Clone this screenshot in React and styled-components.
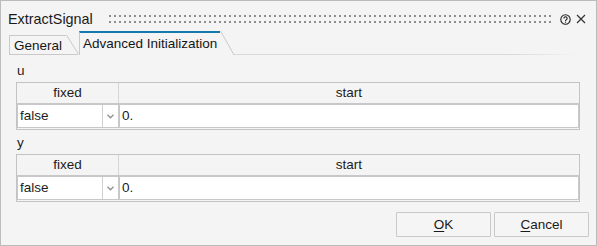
import React from 'react';
import styled, { createGlobalStyle } from 'styled-components';

const GlobalStyle = createGlobalStyle`
  html, body {
    margin: 0;
    padding: 0;
    background: #f4f4f4;
  }
  body {
    font-family: "Liberation Sans", Arial, sans-serif;
  }
`;

const Window = styled.div`
  width: 597px;
  height: 246px;
  box-sizing: border-box;
  border: 1px solid #bcbcbc;
  background: #f4f4f4;
  display: flex;
  flex-direction: column;
  color: #1c1c1c;
  font-size: 13.5px;
`;

const TitleBar = styled.div`
  height: 29px;
  display: flex;
  align-items: flex-start;
  padding: 0 10px 0 7px;
`;

const Title = styled.div`
  font-size: 14.4px;
  line-height: 16px;
  margin-top: 10px;
  color: #1a1a1a;
`;

const Grip = styled.div`
  flex: 1;
  height: 8px;
  margin: 14px 6px 0 16px;
  background-color: #8e8e8e;
  background-image:
    linear-gradient(90deg, transparent 2px, #f4f4f4 2px),
    linear-gradient(transparent 2px, #f4f4f4 2px);
  background-size: 5px 6px;
`;

const IconButton = styled.div`
  width: ${p => p.$size}px;
  height: ${p => p.$size}px;
  margin-top: ${p => p.$top}px;
  margin-left: ${p => p.$gap}px;
  display: flex;
  svg { display: block; }
`;

const TabStrip = styled.div`
  height: 25px;
  display: flex;
  align-items: flex-end;
  padding-left: 8px;
`;

const Tab = styled.div`
  height: ${p => (p.$active ? 24 : 20)}px;
  box-sizing: border-box;
  display: flex;
  padding-right: ${p => p.$slant}px;
  margin-right: 1px;
  border-bottom: ${p => (p.$active ? 'none' : '1px solid #c9c9c9')};
`;

const TabFace = styled.div`
  position: relative;
  box-sizing: border-box;
  height: 100%;
  border-left: 1px solid #c9c9c9;
  border-top: ${p => (p.$active ? '2px solid #1479ad' : '1px solid #c9c9c9')};
  padding: ${p => (p.$active ? '2px 3px 0 3px' : '1px 4px 0 4px')};
  line-height: 17px;
  font-size: 13.5px;
  color: #161616;
  white-space: nowrap;

  &::after {
    content: '';
    position: absolute;
    left: 100%;
    top: ${p => (p.$active ? -2 : -1)}px;
    height: calc(100% + ${p => (p.$active ? 2 : 1)}px);
    width: 1px;
    background: #c9c9c9;
    transform-origin: top left;
    transform: skewX(${p => p.$angle}deg);
  }
`;

const TabLine = styled.div`
  flex: 1;
  height: 1px;
  margin-right: 16px;
  background: linear-gradient(90deg, #d9d9d9 0%, #d9d9d9 80%, rgba(217, 217, 217, 0) 100%);
`;

const Content = styled.div`
  padding: 5px 16px 0 15px;
  display: flex;
  flex-direction: column;
`;

const Label = styled.div`
  line-height: 22px;
  height: 22px;
  margin-top: ${p => (p.$first ? 0 : 2)}px;
  padding-left: 1px;
`;

const Table = styled.div`
  border: 1px solid #c3c3c3;
  background: #f4f4f4;
`;

const HeaderRow = styled.div`
  display: grid;
  grid-template-columns: 102px 1fr;
  height: 20px;
  border-bottom: 1px solid #c8c8c8;
`;

const HeaderCell = styled.div`
  text-align: center;
  line-height: 20px;
  border-right: ${p => (p.$last ? 'none' : '1px solid #d6d6d6')};
`;

const DataRow = styled.div`
  display: grid;
  grid-template-columns: 102px 1fr;
  height: 25px;
`;

const Cell = styled.div`
  box-sizing: border-box;
  height: 24px;
  background: #fff;
  border: 1px solid #c8c8c8;
  display: flex;
  align-items: stretch;
  line-height: 22px;
`;

const Value = styled.div`
  flex: 1;
  padding-left: ${p => p.$pad}px;
`;

const Arrow = styled.div`
  width: 15px;
  border-left: 1px solid #d0d0d0;
  display: flex;
  align-items: center;
  justify-content: center;
`;

const ButtonBar = styled.div`
  margin-top: auto;
  display: flex;
  justify-content: flex-end;
  gap: 3px;
  padding: 0 7px 8px 0;
`;

const Button = styled.div`
  width: 95px;
  height: 25px;
  box-sizing: border-box;
  border: 1px solid #c9c9c9;
  border-radius: 1px;
  background: #f5f5f5;
  display: flex;
  align-items: center;
  justify-content: center;
  color: #1a1a1a;

  u {
    text-decoration: underline;
    text-underline-offset: 2px;
  }
`;

const HelpIcon = () => (
  <svg width="11" height="11" viewBox="0 0 11 11" fill="none">
    <circle cx="5.5" cy="5.5" r="4.7" stroke="#222" strokeWidth="1.1" />
    <path d="M3.9 4.4a1.6 1.6 0 1 1 2.4 1.4c-.55.3-.8.6-.8 1.2" stroke="#222" strokeWidth="1.1" />
    <circle cx="5.5" cy="8.2" r="0.65" fill="#222" />
  </svg>
);

const CloseIcon = () => (
  <svg width="10" height="10" viewBox="0 0 10 10">
    <path d="M1 1L9 9M9 1L1 9" stroke="#333" strokeWidth="1.2" />
  </svg>
);

const ChevronDown = () => (
  <svg width="7" height="5" viewBox="0 0 7 5">
    <path d="M0.5 0.8L3.5 3.8L6.5 0.8" fill="none" stroke="#8f8f8f" strokeWidth="1.3" />
  </svg>
);

const VariableTable = ({ name, first }) => (
  <>
    <Label $first={first}>{name}</Label>
    <Table>
      <HeaderRow>
        <HeaderCell>fixed</HeaderCell>
        <HeaderCell $last>start</HeaderCell>
      </HeaderRow>
      <DataRow>
        <Cell>
          <Value $pad={2}>false</Value>
          <Arrow><ChevronDown /></Arrow>
        </Cell>
        <Cell>
          <Value $pad={2}>0.</Value>
        </Cell>
      </DataRow>
    </Table>
  </>
);

export default function App() {
  return (
    <>
      <GlobalStyle />
      <Window>
        <TitleBar>
          <Title>ExtractSignal</Title>
          <Grip />
          <IconButton $size={11} $top={13} $gap={0}><HelpIcon /></IconButton>
          <IconButton $size={10} $top={13} $gap={5}><CloseIcon /></IconButton>
        </TitleBar>
        <TabStrip>
          <Tab $slant={12}>
            <TabFace $angle={32}>General</TabFace>
          </Tab>
          <Tab $active $slant={13}>
            <TabFace $active $angle={29.5}>Advanced Initialization</TabFace>
          </Tab>
          <TabLine />
        </TabStrip>
        <Content>
          <VariableTable name="u" first />
          <VariableTable name="y" />
        </Content>
        <ButtonBar>
          <Button><span><u>O</u>K</span></Button>
          <Button><span><u>C</u>ancel</span></Button>
        </ButtonBar>
      </Window>
    </>
  );
}
